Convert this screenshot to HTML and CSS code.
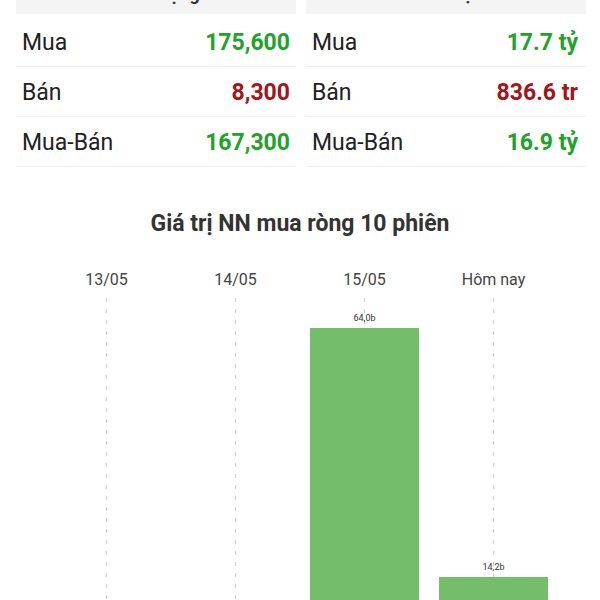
FILE: index.html
```html
<!DOCTYPE html>
<html>
<head>
    <title>Giao dịch NN</title>
    <meta name="viewport" content="width=device-width, initial-scale=1.0">
    <link rel="stylesheet" href="styles.css">
</head>
<body>
    <div class="summary">
        <div class="card">
            <div class="card-head">Khối lượng</div>
            <div class="row"><span class="label">Mua</span><span class="value up">175,600</span></div>
            <div class="row"><span class="label">Bán</span><span class="value down">8,300</span></div>
            <div class="row"><span class="label">Mua-Bán</span><span class="value up">167,300</span></div>
        </div>
        <div class="card">
            <div class="card-head">Giá trị</div>
            <div class="row"><span class="label">Mua</span><span class="value up">17.7 tỷ</span></div>
            <div class="row"><span class="label">Bán</span><span class="value down">836.6 tr</span></div>
            <div class="row"><span class="label">Mua-Bán</span><span class="value up">16.9 tỷ</span></div>
        </div>
    </div>

    <div class="chart">
        <h2 class="chart-title">Giá trị NN mua ròng 10 phiên</h2>
        <div class="columns">
            <div class="col">
                <div class="day">13/05</div>
                <div class="plot"></div>
            </div>
            <div class="col">
                <div class="day">14/05</div>
                <div class="plot"></div>
            </div>
            <div class="col">
                <div class="day">15/05</div>
                <div class="plot">
                    <div class="bar-value">64,0b</div>
                    <div class="bar" style="height: 320px"></div>
                </div>
            </div>
            <div class="col">
                <div class="day">Hôm nay</div>
                <div class="plot">
                    <div class="bar-value">14,2b</div>
                    <div class="bar" style="height: 71px"></div>
                </div>
            </div>
        </div>
    </div>
</body>
</html>
```

FILE: styles.css
```css
body {
    margin: 0;
    background: #fff;
    font-family: Roboto, 'Noto Sans', Arial, sans-serif;
    color: #222;
}

.summary {
    display: grid;
    grid-template-columns: 1fr 1fr;
    gap: 10px;
    padding: 0 14px 0 16px;
    margin-top: -25px;
}

.card-head {
    height: 39px;
    line-height: 38px;
    margin-bottom: 3px;
    background: #f4f4f4;
    text-align: center;
    font-size: 18px;
    font-weight: bold;
    color: #333;
}

.row {
    display: flex;
    justify-content: space-between;
    align-items: center;
    height: 47px;
    padding: 2px 6px 0;
    border-bottom: 1px solid #efefef;
    font-size: 23px;
}

.card:last-child .row {
    padding-right: 8px;
}

.value {
    font-weight: bold;
}

.up {
    color: #22a12b;
}

.down {
    color: #a5131b;
}

.chart-title {
    margin: 43px 0 0;
    line-height: 28px;
    text-align: center;
    font-size: 23px;
    font-weight: bold;
    color: #333;
}

.columns {
    display: flex;
    padding-left: 42px;
    margin-top: 32px;
}

.col {
    width: 129px;
    display: flex;
    flex-direction: column;
}

.day {
    height: 20px;
    line-height: 20px;
    text-align: center;
    font-size: 16px;
    color: #444;
}

.plot {
    height: 350px;
    margin-top: 8px;
    display: flex;
    flex-direction: column;
    justify-content: flex-end;
    align-items: center;
    background-image: repeating-linear-gradient(to bottom, #cfcfcf 0 4px, transparent 4px 11px);
    background-size: 1px 100%;
    background-position: center top;
    background-repeat: no-repeat;
}

.bar-value {
    font-size: 9px;
    line-height: 12px;
    margin-bottom: 4px;
    color: #333;
}

.bar {
    width: 109px;
    background: #73bd6b;
}
```
